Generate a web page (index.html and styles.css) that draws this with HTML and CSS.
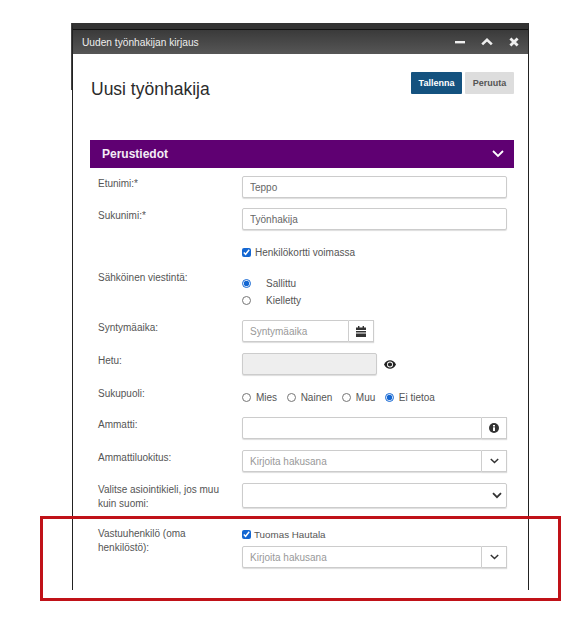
FILE: index.html
```html
<!DOCTYPE html>
<html lang="fi">
<head>
    <meta charset="UTF-8">
    <title>Uuden työnhakijan kirjaus</title>
    <link rel="stylesheet" href="styles.css">
</head>
<body>
    <!-- ikkuna -->
    <div class="win">
        <header class="win-bar">
            <span class="win-tit">Uuden työnhakijan kirjaus</span>
            <span class="win-btns">
                <svg width="10" height="10" viewBox="0 0 10 10"><rect x="0" y="4" width="10" height="2.4" fill="#eee"/></svg>
                <svg width="12" height="10" viewBox="0 0 12 10"><path d="M1.2 7.4 6 2.8l4.8 4.6" fill="none" stroke="#eee" stroke-width="2.6"/></svg>
                <svg width="10" height="10" viewBox="0 0 10 10"><path d="M1.4 1.4l7.2 7.2M8.6 1.4 1.4 8.6" fill="none" stroke="#eee" stroke-width="2.8"/></svg>
            </span>
        </header>

        <main class="win-body">
            <div class="top">
                <h1 class="page-tit">Uusi työnhakija</h1>
                <div class="actions">
                    <button class="btn btn-save">Tallenna</button>
                    <button class="btn btn-cancel">Peruuta</button>
                </div>
            </div>

            <div class="sect">
                <span>Perustiedot</span>
                <svg width="12" height="8" viewBox="0 0 12 8"><path d="M1 1l5 5 5-5" fill="none" stroke="#fff" stroke-width="1.8"/></svg>
            </div>

            <form class="form">
                <div class="row r-etu">
                    <label class="lbl">Etunimi:*</label>
                    <input class="inp" type="text" value="Teppo">
                </div>
                <div class="row r-suku">
                    <label class="lbl">Sukunimi:*</label>
                    <input class="inp" type="text" value="Työnhakija">
                </div>
                <div class="row r-kortti">
                    <span></span>
                    <label class="chk"><input type="checkbox" checked> Henkilökortti voimassa</label>
                </div>
                <div class="row r-viesti">
                    <label class="lbl">Sähköinen viestintä:</label>
                    <div class="rads">
                        <label class="rad"><input type="radio" name="v" checked> Sallittu</label>
                        <label class="rad"><input type="radio" name="v"> Kielletty</label>
                    </div>
                </div>
                <div class="row r-synt">
                    <label class="lbl">Syntymäaika:</label>
                    <div class="grp grp-date">
                        <input class="inp" type="text" placeholder="Syntymäaika">
                        <span class="add">
                            <svg width="10" height="11" viewBox="0 0 10 11"><path d="M2 0h1.4v1.5h3.2V0H8v1.5h2V4H0V1.5h2zM0 5h10v1.6H0zM0 7.6h10V11H0z" fill="#333"/></svg>
                        </span>
                    </div>
                </div>
                <div class="row r-hetu">
                    <label class="lbl">Hetu:</label>
                    <div class="hetu">
                        <input class="inp inp-off" type="text" disabled>
                        <svg width="12" height="9" viewBox="0 0 12 9"><path d="M0 4.500C1.500 1.600 3.600.3 6 .3s4.500 1.300 6 4.200C10.500 7.400 8.400 8.700 6 8.700S1.500 7.400 0 4.500z" fill="#222"/><circle cx="6" cy="4.500" r="3" fill="#fff"/><circle cx="6" cy="4.500" r="2.100" fill="#222"/></svg>
                    </div>
                </div>
                <div class="row r-sp">
                    <label class="lbl">Sukupuoli:</label>
                    <div class="sp">
                        <label class="sp-i"><input type="radio" name="s"> Mies</label>
                        <label class="sp-i"><input type="radio" name="s"> Nainen</label>
                        <label class="sp-i"><input type="radio" name="s"> Muu</label>
                        <label class="sp-i"><input type="radio" name="s" checked> Ei tietoa</label>
                    </div>
                </div>
                <div class="row r-amm">
                    <label class="lbl">Ammatti:</label>
                    <div class="grp">
                        <input class="inp" type="text">
                        <span class="add">
                            <svg width="10" height="10" viewBox="0 0 10 10"><circle cx="5" cy="5" r="5" fill="#333"/><rect x="4" y="4.300" width="2" height="3.700" fill="#fff"/><rect x="4" y="2" width="2" height="1.500" fill="#fff"/></svg>
                        </span>
                    </div>
                </div>
                <div class="row r-luok">
                    <label class="lbl">Ammattiluokitus:</label>
                    <div class="grp">
                        <input class="inp" type="text" placeholder="Kirjoita hakusana">
                        <span class="add">
                            <svg width="9" height="6" viewBox="0 0 9 6"><path d="M.8 1l3.700 3.500L8.200 1" fill="none" stroke="#333" stroke-width="1.500"/></svg>
                        </span>
                    </div>
                </div>
                <div class="row r-kieli">
                    <label class="lbl">Valitse asiointikieli, jos muu kuin suomi:</label>
                    <div class="sel">
                        <svg width="10" height="7" viewBox="0 0 10 7"><path d="M1 1.200l4 4 4-4" fill="none" stroke="#333" stroke-width="1.800"/></svg>
                    </div>
                </div>
                <div class="row r-vast">
                    <label class="lbl">Vastuuhenkilö (oma henkilöstö):</label>
                    <div>
                        <label class="chk chk-vast"><input type="checkbox" checked> Tuomas Hautala</label>
                        <div class="grp">
                            <input class="inp" type="text" placeholder="Kirjoita hakusana">
                            <span class="add">
                                <svg width="9" height="6" viewBox="0 0 9 6"><path d="M.8 1l3.700 3.500L8.200 1" fill="none" stroke="#333" stroke-width="1.500"/></svg>
                            </span>
                        </div>
                    </div>
                </div>
            </form>
        </main>
    </div>

    <!-- punainen korostus -->
    <div class="mark"></div>
</body>
</html>
```

FILE: styles.css
```css
html,
body {
    margin: 0;
    padding: 0;
    height: 100%;
    background: #fff;
    font-family: "Liberation Sans", Arial, sans-serif;
    color: #333;
    overflow: hidden;
}

/* ikkuna */
.win {
    position: relative;
    width: 455px;
    margin: 23px 0 0 72px;
    border-left: 1px solid #222;
    border-right: 1px solid #222;
    border-top: 6px solid #333;
}

/* ylakulman tumma reuna */
.win::before {
    content: "";
    position: absolute;
    left: -2px;
    top: -6px;
    width: 1px;
    height: 67px;
    background: #444;
}

.win-bar {
    box-sizing: border-box;
    display: flex;
    justify-content: space-between;
    align-items: center;
    height: 25px;
    padding: 0 9px;
    border-top: 1px solid #111;
    background: linear-gradient(#3a3a3a, #565656);
    color: #eee;
    font-size: 10.200px;
}

.win-btns {
    display: flex;
    align-items: center;
    gap: 16px;
}

.win-body {
    height: 536px;
    padding: 0 14px 0 17px;
    background: #fff;
}

/* otsikko + napit */
.top {
    display: flex;
    justify-content: space-between;
    padding-top: 18px;
    height: 68px;
}

.page-tit {
    margin: 7px 0 0 1px;
    font-size: 17.500px;
    font-weight: normal;
    color: #2b2b2b;
}

.actions {
    display: flex;
    gap: 3px;
    height: 22px;
}

.btn {
    border: 0;
    padding: 0;
    font: bold 9px "Liberation Sans", Arial, sans-serif;
    border-radius: 1px;
}

.btn-save {
    width: 51px;
    background: #14527f;
    color: #fff;
}

.btn-cancel {
    width: 49px;
    background: #ddd;
    color: #555;
}

/* osion palkki */
.sect {
    display: flex;
    justify-content: space-between;
    align-items: center;
    height: 28px;
    padding: 0 10px 0 12px;
    background: #5f0072;
    color: #f4ecf6;
    font-size: 12px;
    font-weight: bold;
}

/* lomake */
.form {
    padding: 0 7px 0 8px;
    font-size: 10px;
}

.row {
    display: grid;
    grid-template-columns: 144px 265px;
}

.lbl {
    line-height: 15px;
    color: #555;
    padding-right: 20px;
}

.inp {
    box-sizing: border-box;
    width: 100%;
    height: 22px;
    margin: 0;
    padding: 0 7px;
    border: 1px solid #ccc;
    border-radius: 2px;
    box-shadow: 0 1px 1px #ddd;
    font: 10px "Liberation Sans", Arial, sans-serif;
    color: #666;
    background: #fff;
}

.inp::placeholder {
    color: #999;
}

.inp-off {
    background: #eee;
}

.chk {
    display: flex;
    align-items: center;
    gap: 4px;
    color: #555;
}

.chk input {
    width: 9px;
    height: 9px;
    margin: 0;
    accent-color: #1467d2;
}

.rads {
    display: flex;
    flex-direction: column;
    gap: 4px;
    padding-top: 7px;
}

.rad {
    display: flex;
    align-items: center;
    gap: 15px;
    height: 13px;
    color: #555;
}

.rad input,
.sp-i input {
    width: 9px;
    height: 9px;
    margin: 0;
    accent-color: #1467d2;
}

.grp {
    display: flex;
}

.grp .inp {
    flex: 1;
    min-width: 0;
    border-radius: 2px 0 0 2px;
}

.add {
    box-sizing: border-box;
    display: flex;
    justify-content: center;
    align-items: center;
    flex: none;
    width: 25px;
    height: 22px;
    border: 1px solid #ccc;
    border-left: 0;
    box-shadow: 0 1px 1px #ddd;
    background: #fff;
}

.grp-date {
    width: 132px;
}

.hetu {
    display: flex;
    align-items: center;
    gap: 7px;
}

.hetu .inp {
    width: 135px;
}

.sp {
    display: flex;
    align-items: center;
    gap: 9.500px;
    height: 13px;
    padding-top: 5px;
    color: #555;
}

.sp-i {
    display: flex;
    align-items: center;
    gap: 5px;
}

.sel {
    box-sizing: border-box;
    display: flex;
    justify-content: flex-end;
    align-items: center;
    height: 25px;
    padding-right: 4px;
    border: 1px solid #ccc;
    border-radius: 2px;
    box-shadow: 0 1px 1px #ddd;
}

/* rivien paikat */
.r-etu { margin-top: 8px; }
.r-suku { margin-top: 10px; }
.r-kortti { margin-top: 17px; }
.r-viesti { margin-top: 12px; }
.r-synt { margin-top: 13px; }
.r-hetu { margin-top: 11px; }
.r-sp { margin-top: 11px; }
.r-amm { margin-top: 13px; }
.r-luok { margin-top: 11px; }
.r-kieli { margin-top: 11px; }
.r-kieli .lbl { line-height: 14px; }
.r-vast { margin-top: 16px; }
.r-vast .lbl { line-height: 14px; }

.chk-vast {
    gap: 3px;
    height: 13px;
    margin: 1px 0 5px;
    font-size: 9.800px;
}

/* punainen korostus */
.mark {
    position: absolute;
    left: 40px;
    top: 516px;
    width: 515px;
    height: 79px;
    border: 3px solid #c01218;
}
```
